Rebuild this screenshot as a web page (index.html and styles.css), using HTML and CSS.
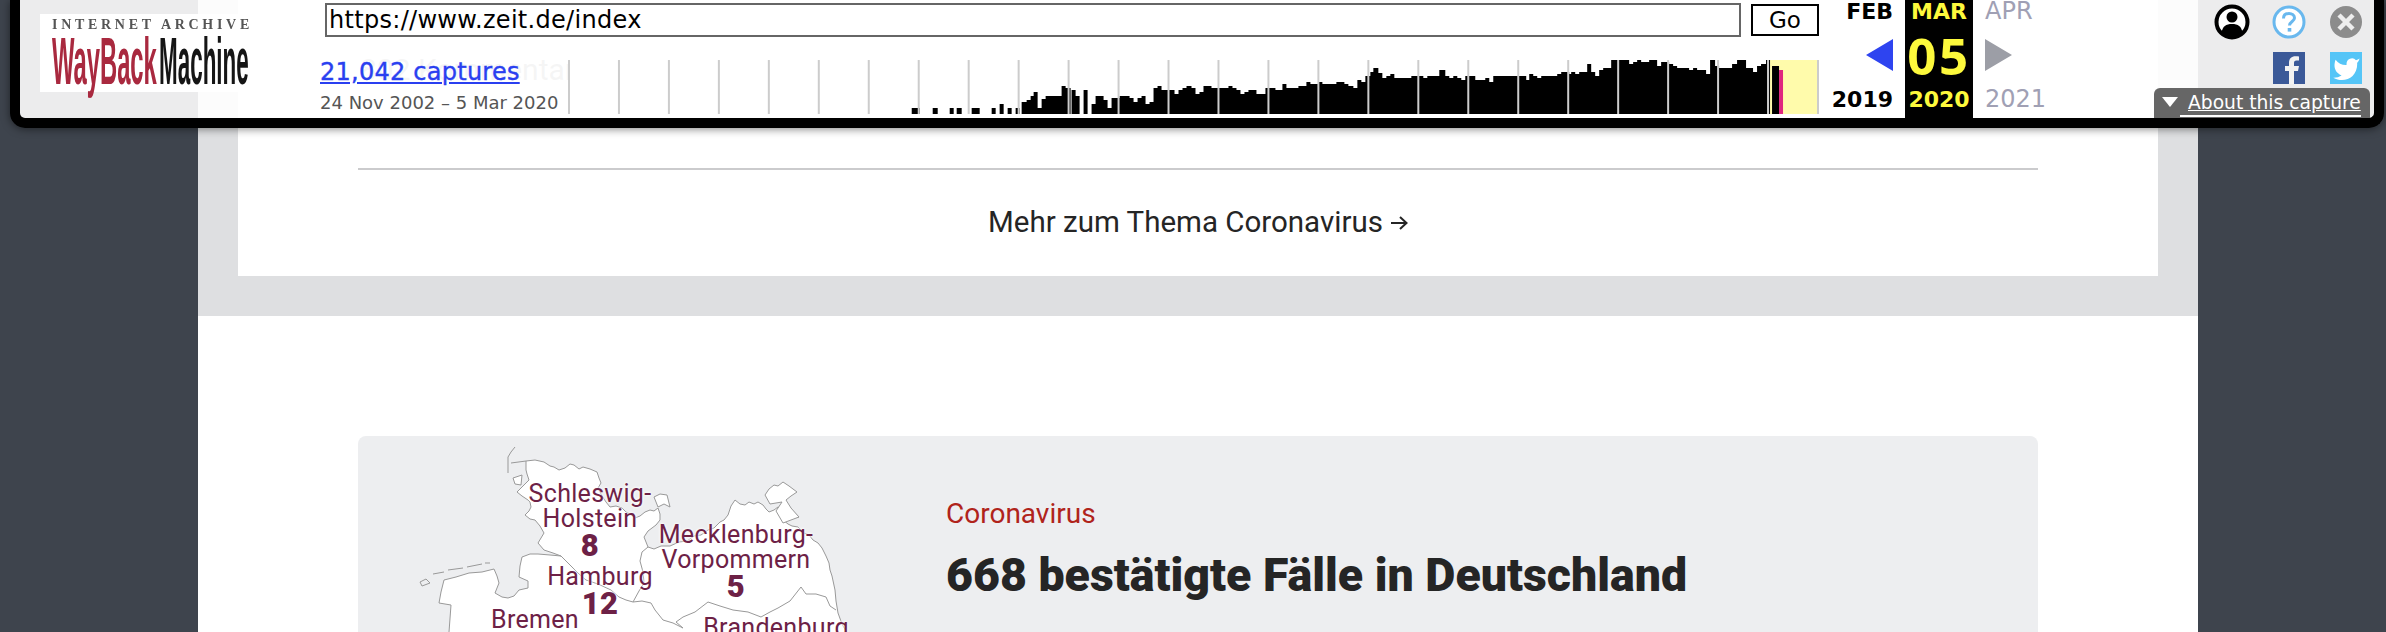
FILE: index.html
```html
<!DOCTYPE html>
<html lang="de">
  <head>
    <meta charset="UTF-8" />
    <meta name="viewport" content="width=device-width, initial-scale=1.0" />
    <title>ZEIT ONLINE - Wayback Machine</title>
    <link rel="stylesheet" href="styles.css">
  </head>
  <body>
    <div class="page">
      <section class="more-band">
        <div class="more-card">
          <p class="comments-ghost">802 Kommentar</p>
          <a class="more-link" href="#">Mehr zum Thema Coronavirus
            <svg class="more-arrow" width="17" height="16" viewBox="0 0 17 16">
              <path d="M0 8H15M9 2L15.500 8L9 14" fill="none" stroke="#252525" stroke-width="2" />
            </svg>
          </a>
        </div>
      </section>

      <section class="teaser-wrap">
        <article class="teaser">
          <div class="map-box">
            <svg class="map" width="588" height="320" viewBox="0 0 588 320">
              <path class="land" d="M168 25L177 24L186 26L192 30L196 31L201 34L207 32L212 28L216 29L221 33L225 31L232 33L239 36L241 42L243 47L240 52L244 60L248 66L252 71L258 70L264 72L268 76L272 78L277 82L282 80L287 76L292 74L296 75L300 72L302 78L302 84L298 89L294 92L290 95L286 101L288 106L290 111L296 113L303 110L312 110L321 106L329 105L336 100L343 99L350 94L356 92L362 86L366 84L370 79L373 70L377 64L382 68L387 69L391 66L396 68L400 66L405 69L408 73L411 76L416 74L420 71L424 73L428 72L432 75L436 76L441 81L433 82L425 84L430 88L434 90L440 91L446 97L451 99L455 104L460 107L464 112L468 120L471 127L472 134L474 140L477 154L478 165L480 177L484 188L489 197L500 320L92 320L91 196L93 169L81 167L83 156L86 144L98 141L111 137L124 136L136 133L139 140L141 147L137 157L144 161L150 162L156 160L161 154L170 152L170 145L161 141L162 130L164 121L172 118L180 118L192 119L203 120L195 117L186 114L180 107L183 102L186 97L182 90L177 84L172 83L167 79L171 75L173 71L172 66L170 64L164 60L159 56L166 49L171 44L169 38L168 34Z" />
              <path class="land" d="M296 61L302 58L309 59L312 71L306 68L300 71Z" />
              <path class="land" d="M407 59L411 53L416 49L420 50L425 46L431 50L439 56L433 60L428 64L433 72L441 81L433 84L425 87L418 75L424 66L418 67L412 68Z" />
              <path class="land" d="M155 42L164 39L163 49L157 48Z" />
              <path class="coast" d="M157 11L153 16L150 21L150 37M153 27L168 25" />
              <path class="coast" d="M62 146L68 143L72 147L64 150ZM75 138L86 136M90 134L105 132M109 131L124 128M127 127L132 127" />
              <path class="coast" d="M203 120L214 131L221 138L228 144L240 148L253 154L261 161L268 164L275 166L284 165L293 167L297 174L305 184L315 187L325 192" />
              <path class="coast" d="M290 111L284 116L282 125L285 136L286 147L281 155L275 166" />
              <path class="coast" d="M325 192L318 186L325 181L337 176L350 166L362 170L375 174L390 176L403 181L412 176L420 172L432 165L443 151L448 158L458 158L468 161L472 170L478 174" />
            </svg>
            <span class="map-label label-sh">Schleswig-<br>Holstein<b>8</b></span>
            <span class="map-label label-mv">Mecklenburg-<br>Vorpommern<b>5</b></span>
            <span class="map-label label-hh">Hamburg<b>12</b></span>
            <span class="map-label label-hb">Bremen</span>
            <span class="map-label label-bb">Brandenburg</span>
          </div>
          <div class="teaser-text">
            <p class="kicker">Coronavirus</p>
            <h2 class="headline">668 bestätigte Fälle in Deutschland</h2>
          </div>
        </article>
      </section>
    </div>

    <div class="toolbar">
      <div class="logo-col">
        <div class="logo">
          <div class="logo-top">INTERNET ARCHIVE</div>
          <div class="logo-main"><span class="logo-red">WayBack</span><span class="logo-black">Machine</span></div>
        </div>
      </div>

      <div class="search-col">
        <form class="url-row">
          <input class="url-input" type="text" value="https://www.zeit.de/index">
          <button class="go-btn" type="button">Go</button>
        </form>
        <div class="capture-row">
          <div class="capture-info">
            <a class="capture-count" href="#">21,042 captures</a>
            <div class="capture-dates">24 Nov 2002 – 5 Mar 2020</div>
          </div>
          <svg class="sparkline" width="1252" height="54" viewBox="568 60 1252 54">
            <defs>
              <pattern id="yearLines" x="568" y="60" width="50" height="54" patternUnits="userSpaceOnUse">
                <rect width="2" height="54" fill="#cccccc" />
              </pattern>
            </defs>
            <rect x="1771" y="60" width="49" height="54" fill="#fffbab" />
            <path d="M912 114V108H920V114H933V108H938V114H950V108H954V114H957V108H962V114H972V108H980V114H992V108H996V114H1000V104H1004V114H1008V108H1012V114H1016V108H1020V114H1022V102H1027V100H1031V96H1034V92H1038V108H1042V99H1046V96H1062V86H1066V88H1071V114H1072V90H1076V96H1080V114H1084V90H1088V114H1092V104H1096V96H1104V100H1108V108H1112V98H1120V96H1130V98H1134V102H1138V98H1142V96H1146V104H1150V102H1154V88H1158V86H1162V90H1175V94H1179V90H1183V88H1187V86H1192V88H1196V94H1200V92H1204V86H1212V88H1229V86H1233V88H1237V90H1241V94H1245V92H1249V90H1257V94H1266V88H1276V90H1283V84H1287V88H1299V86H1307V82H1311V84H1319V82H1323V84H1337V82H1345V84H1349V86H1354V88H1358V80H1362V82H1366V76H1371V72H1374V68H1379V73H1383V78H1387V76H1391V74H1395V78H1412V76H1424V78H1428V76H1440V70H1446V76H1450V78H1454V76H1458V78H1462V80H1466V76H1476V80H1486V78H1490V82H1494V76H1527V80H1530V74H1534V76H1538V78H1542V76H1558V74H1562V72H1570V74H1572V72H1576V74H1580V72H1588V64H1592V72H1596V76H1600V70H1604V68H1612V60H1630V64H1634V62H1638V60H1642V62H1650V60H1658V66H1662V62H1670V64H1674V66H1678V68H1690V70H1694V68H1698V70H1707V74H1711V60H1716V66H1720V68H1733V64H1738V60H1747V68H1754V72H1758V66H1762V64H1767V60H1771V114ZM1773 114V66H1780V114Z" fill="#000" />
            <rect x="1780" y="70" width="4" height="44" fill="#e0267f" />
            <rect x="568" y="60" width="1252" height="54" fill="url(#yearLines)" />
          </svg>
        </div>
      </div>

      <div class="cal-col cal-prev">
        <span class="cal-month">FEB</span>
        <div class="cal-mid"><span class="arrow-prev"></span></div>
        <span class="cal-year">2019</span>
      </div>
      <div class="cal-col cal-current">
        <span class="cal-month">MAR</span>
        <div class="cal-mid"><span class="cal-day">05</span></div>
        <span class="cal-year">2020</span>
      </div>
      <div class="cal-col cal-next">
        <span class="cal-month">APR</span>
        <div class="cal-mid"><span class="arrow-next"></span></div>
        <span class="cal-year">2021</span>
      </div>

      <div class="tb-icons">
        <svg class="icon" width="36" height="36" viewBox="0 0 36 36">
          <circle cx="18" cy="18" r="15.5" fill="#fff" stroke="#000" stroke-width="4" />
          <circle cx="18" cy="13" r="5.5" fill="#000" />
          <path d="M7.5 29C8.5 22 12 20 18 20S27.500 22 28.500 29A15 15 0 0 1 7.500 29Z" fill="#000" />
        </svg>
        <svg class="icon" width="34" height="34" viewBox="0 0 34 34">
          <circle cx="17" cy="17" r="15" fill="#fff" stroke="#69b8ee" stroke-width="3" />
          <path d="M11.500 13.500C11.500 10 14 8.500 17 8.500S22.500 10.200 22.500 13C22.500 16.500 17.500 16.500 17.500 20.500" fill="none" stroke="#69b8ee" stroke-width="3" />
          <rect x="15.700" y="23" width="3.600" height="3.600" fill="#69b8ee" />
        </svg>
        <svg class="icon" width="34" height="34" viewBox="0 0 34 34">
          <circle cx="17" cy="17" r="16" fill="#8c8c8c" />
          <path d="M10 10L24 24M24 10L10 24" stroke="#eee" stroke-width="4.500" />
        </svg>
        <span></span>
        <svg class="icon" width="32" height="32" viewBox="0 0 32 32">
          <rect width="32" height="32" fill="#3b5998" />
          <path d="M21 32V19H25L26 14H21V11C21 9.500 21.500 8.500 23.500 8.500H26V4.500C25 4.300 24 4.200 22.500 4.200C18.500 4.200 16 6.500 16 10.500V14H12V19H16V32Z" fill="#f2f2f2" />
        </svg>
        <svg class="icon" width="32" height="32" viewBox="0 0 32 32">
          <rect width="32" height="32" fill="#55c5f7" />
          <path transform="translate(2 3) scale(1.200)" d="M23 3a10.900 10.900 0 0 1-3 1.400 4.500 4.500 0 0 0-7.900 3v1A10.700 10.700 0 0 1 3 4s-4 9 5 13a11.600 11.600 0 0 1-7 2c9 5 20 0 20-11.500a4.500 4.500 0 0 0-.1-.8A7.700 7.700 0 0 0 23 3z" fill="#fff" />
        </svg>
      </div>

      <a class="about-tab" href="#"><span class="about-arrow"></span><span class="about-text"> About this capture</span></a>
    </div>
  </body>
</html>
```

FILE: styles.css
```css
/* Page underneath */
body {
  margin: 0;
  height: 632px;
  overflow: hidden;
  background-color: #3e444d;
  font-family: "Roboto", sans-serif;
}

.page {
  width: 2000px;
  margin-left: 198px;
  background-color: #fff;
  height: 632px;
  overflow: hidden;
}

.more-band {
  background-color: #dedfe1;
  padding: 0 40px 40px;
}

.more-card {
  background-color: #fff;
  height: 276px;
  padding: 0 120px;
  display: flex;
  flex-direction: column;
}

.comments-ghost {
  margin: 48px 0 0;
  height: 120px;
  padding-left: 2px;
  font-size: 30px;
  line-height: 44px;
  color: #999;
  border-bottom: 2px solid #cbcbcd;
}

.more-link {
  flex: 1;
  display: flex;
  justify-content: center;
  align-items: center;
  padding-bottom: 2px;
  color: #252525;
  font-size: 29.5px;
  text-decoration: none;
}

.more-arrow {
  flex: none;
  margin: 2px 0 0 8px;
}

.teaser-wrap {
  padding: 120px 160px 0;
}

.teaser {
  display: flex;
  height: 400px;
  background-color: #edeef0;
  border-radius: 8px;
}

.map-box {
  position: relative;
  width: 588px;
  flex: none;
}

.map {
  display: block;
}

.land {
  fill: #fff;
  stroke: #999;
  stroke-width: 1;
}

.coast {
  fill: none;
  stroke: #999;
  stroke-width: 1;
}

.map-label {
  position: absolute;
  transform: translateX(-50%);
  text-align: center;
  white-space: nowrap;
  color: #6d2146;
  font-size: 25px;
  line-height: 25px;
  letter-spacing: 0.3px;
  text-shadow: 0 0 3px #fff, 0 0 3px #fff;
}

.map-label b {
  display: block;
  font-size: 31px;
  line-height: 29px;
  font-weight: 900;
}

.label-sh { left: 232px; top: 45px; }
.label-mv { left: 378px; top: 86px; }
.label-hh { left: 242px; top: 128px; }
.label-hb { left: 177px; top: 171px; }
.label-bb { left: 418px; top: 179px; }

.teaser-text {
  padding-top: 63px;
}

.kicker {
  margin: 0;
  color: #b0231b;
  font-size: 28px;
  line-height: 30px;
}

.headline {
  margin: 20px 0 0;
  color: #252525;
  font-size: 46.5px;
  line-height: 52px;
  font-weight: 900;
  white-space: nowrap;
}

/* Wayback toolbar */
.toolbar {
  position: absolute;
  top: 0;
  left: 10px;
  width: 2354px;
  height: 118px;
  display: flex;
  background-color: rgba(255, 255, 255, 0.9);
  border: 10px solid #000;
  border-top: none;
  border-radius: 0 0 15px 15px;
  box-shadow: 0 1px 8px rgba(0, 0, 0, 0.5);
  font-family: "DejaVu Sans", sans-serif;
}

.logo-col {
  width: 300px;
  flex: none;
}

.logo {
  margin: 14px 0 0 20px;
  width: 210px;
  height: 78px;
  background-color: #fff;
  filter: blur(0.6px);
}

.logo-top {
  padding: 4px 0 0 12px;
  font-family: "Liberation Serif", serif;
  font-size: 14px;
  line-height: 14px;
  font-weight: bold;
  letter-spacing: 3.7px;
  color: #555;
  white-space: nowrap;
}

.logo-main {
  display: flex;
  padding-left: 12px;
  font-family: "Liberation Sans", sans-serif;
  font-size: 66px;
  line-height: 58px;
  font-weight: bold;
  white-space: nowrap;
}

.logo-red,
.logo-black {
  display: block;
  flex: none;
  transform-origin: left center;
}

.logo-red {
  width: 107px;
  color: #a9293f;
  transform: scaleX(0.36);
}

.logo-black {
  width: 90px;
  color: #151515;
  transform: scaleX(0.34);
}

.search-col {
  width: 1499px;
  flex: none;
  position: relative;
}

.url-row {
  display: flex;
  gap: 10px;
  padding: 3px 0 0 5px;
  margin: 0;
}

.url-input {
  box-sizing: border-box;
  width: 1416px;
  height: 34px;
  padding: 0 2px;
  border: 2px solid #666;
  background-color: #fff;
  font-family: "DejaVu Sans", sans-serif;
  font-size: 24px;
  letter-spacing: 0.3px;
  color: #000;
  outline: none;
}

.go-btn {
  box-sizing: border-box;
  width: 68px;
  height: 32px;
  margin-top: 1px;
  padding: 0;
  border: 2px solid #000;
  background-color: #fff;
  font-family: "DejaVu Sans", sans-serif;
  font-size: 23px;
  color: #000;
}

.capture-row {
  display: flex;
  margin-top: 23px;
}

.capture-info {
  width: 248px;
  flex: none;
}

.capture-count {
  display: block;
  margin-top: -4px;
  font-size: 24px;
  line-height: 32px;
  letter-spacing: 0.25px;
  -webkit-text-stroke: 0.4px #2a3ff0;
  color: #2a3ff0;
}

.capture-dates {
  margin-top: 3px;
  font-size: 18px;
  line-height: 24px;
  color: #555;
}

.sparkline {
  display: block;
  background-color: #fff;
}

.cal-col {
  display: grid;
  grid-template-rows: 23px 64px 24px;
  flex: none;
  font-weight: bold;
  font-size: 22px;
}

.cal-prev {
  width: 86px;
  box-sizing: border-box;
  padding-right: 12px;
  justify-items: end;
  color: #000;
}

.cal-current {
  width: 68px;
  height: 118px;
  justify-items: center;
  background-color: #000;
  color: #fdf93c;
}

.cal-next {
  width: 100px;
  box-sizing: border-box;
  padding-left: 12px;
  justify-items: start;
  color: #a0a0b4;
  font-weight: normal;
  font-size: 24px;
}

.cal-month,
.cal-year {
  line-height: 23px;
}

.cal-year {
  padding-top: 1px;
}

.cal-mid {
  display: flex;
  align-items: center;
}

.cal-day {
  font-family: "Open Sans", sans-serif;
  font-size: 51px;
  line-height: 60px;
  letter-spacing: 2.5px;
}

.arrow-prev {
  border-top: 16px solid transparent;
  border-bottom: 16px solid transparent;
  border-right: 27px solid #2e44f0;
}

.arrow-next {
  border-top: 16px solid transparent;
  border-bottom: 16px solid transparent;
  border-left: 27px solid #9c9ea6;
}

.tb-icons {
  margin-left: auto;
  width: 171px;
  flex: none;
  display: grid;
  grid-template-columns: repeat(3, 57px);
  grid-template-rows: 44px 48px;
  justify-items: center;
  align-items: center;
}

.icon {
  display: block;
}

.about-tab {
  position: absolute;
  right: 4px;
  bottom: 0;
  width: 216px;
  height: 30px;
  box-sizing: border-box;
  padding-left: 8px;
  display: flex;
  align-items: flex-end;
  background-color: #666;
  border-radius: 6px 6px 0 0;
  color: #fff;
  font-size: 18.7px;
}

.about-arrow {
  flex: none;
  width: 0;
  margin-right: 2px;
  margin-bottom: 11px;
  border-left: 8px solid transparent;
  border-right: 8px solid transparent;
  border-top: 10px solid #fff;
}

.about-text {
  padding-left: 8px;
  margin-bottom: 1px;
  line-height: 24px;
  border-bottom: 2px solid #fff;
  white-space: nowrap;
}
```
